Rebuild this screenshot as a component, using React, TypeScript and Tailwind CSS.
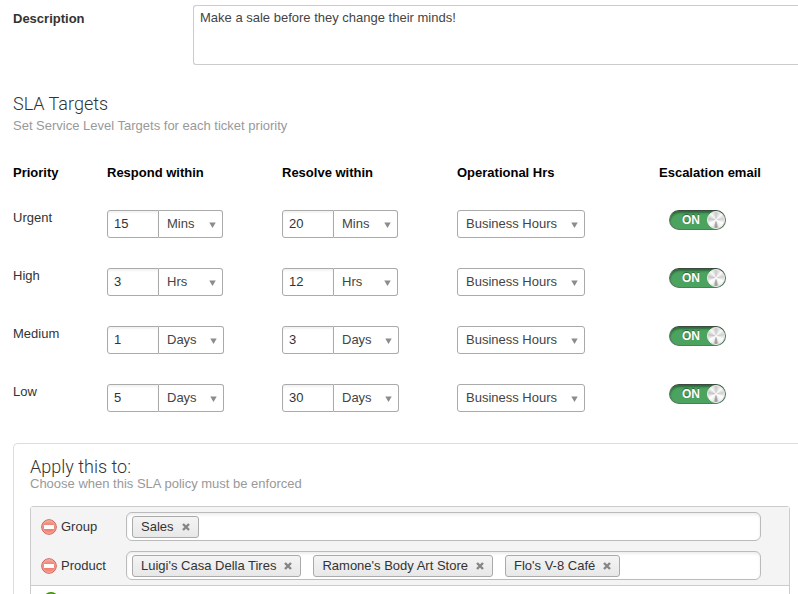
import { useState } from 'react';

type Unit = 'Mins' | 'Hrs' | 'Days';

interface Target {
  priority: string;
  respond: [string, Unit];
  resolve: [string, Unit];
}

const targets: Target[] = [
  { priority: 'Urgent', respond: ['15', 'Mins'], resolve: ['20', 'Mins'] },
  { priority: 'High', respond: ['3', 'Hrs'], resolve: ['12', 'Hrs'] },
  { priority: 'Medium', respond: ['1', 'Days'], resolve: ['3', 'Days'] },
  { priority: 'Low', respond: ['5', 'Days'], resolve: ['30', 'Days'] },
];

const conditions = [
  { name: 'Group', tags: ['Sales'] },
  { name: 'Product', tags: ["Luigi's Casa Della Tires", "Ramone's Body Art Store", "Flo's V-8 Café"] },
];

function Caret() {
  return (
    <svg className="pointer-events-none absolute top-3 right-[7px] h-[6px] w-[7px]" viewBox="0 0 7 6" aria-hidden="true">
      <path d="M0.3 0.5h6.4L3.5 6z" fill="#8c8c8c" />
    </svg>
  );
}

function Duration({ label, value, unit }: { label: string; value: string; unit: Unit }) {
  return (
    <div className="flex">
      <input
        type="text"
        aria-label={label}
        defaultValue={value}
        className="h-7 w-[52px] rounded-l-[3px] border border-[#aaa] bg-white px-1.5 pb-0.5 text-[#333] shadow-[inset_0_2px_2px_#f3f3f3]"
      />
      <div className="relative">
        <select
          aria-label={`${label} unit`}
          defaultValue={unit}
          className={`block h-7 appearance-none rounded-r-[3px] border border-l-0 border-[#aaa] bg-white pl-2 text-[#444] ${unit === 'Days' ? 'w-[65px]' : 'w-16'}`}
        >
          <option>Mins</option>
          <option>Hrs</option>
          <option>Days</option>
        </select>
        <Caret />
      </div>
    </div>
  );
}

function Toggle({ label }: { label: string }) {
  const [on, setOn] = useState(true);
  return (
    <label className="relative ml-2.5 flex h-5 w-[57px] items-center justify-between rounded-full border border-[#5c7563] border-t-[#3a4a3e] bg-[#4ca35f] pl-3 shadow-[inset_0_2px_2px_#2c6b3c]">
      <input type="checkbox" aria-label={label} checked={on} onChange={() => setOn(!on)} className="absolute inset-0 opacity-0" />
      <span className="text-[12px] leading-5 font-bold text-white [text-shadow:0_-1px_1px_#285f36]">{on ? 'ON' : 'OFF'}</span>
      <span className="h-[18px] w-[18px] rounded-full border border-[#eee] bg-[conic-gradient(#c9c9c9,#fafafa_45deg,#cfcfcf_80deg,#fff_115deg,#f0f0f0_155deg,#8e8e8e_180deg,#f0f0f0_205deg,#fff_240deg,#c4c4c4_280deg,#fafafa_320deg,#c9c9c9)]" />
    </label>
  );
}

function RemoveIcon() {
  return (
    <svg className="h-4 w-4" viewBox="0 0 16 16" aria-hidden="true">
      <defs>
        <linearGradient id="remove" x2="0" y2="1">
          <stop stopColor="#f5aa9e" />
          <stop offset="0.5" stopColor="#ee7567" />
          <stop offset="1" stopColor="#fa9484" />
        </linearGradient>
      </defs>
      <circle cx="8" cy="8" r="7.3" fill="url(#remove)" stroke="#c66459" />
      <circle cx="8" cy="8" r="6.3" fill="none" stroke="#fab5a9" strokeWidth="0.7" />
      <rect x="3" y="6" width="10" height="4" fill="#fff" />
    </svg>
  );
}

function AddIcon() {
  return (
    <svg className="h-4 w-4" viewBox="0 0 16 16" aria-hidden="true">
      <circle cx="8" cy="8" r="7.3" fill="#85cc2c" stroke="#3f8c0b" strokeWidth="1.4" />
      <path d="M8 4v8M4 8h8" stroke="#fff" strokeWidth="2.5" />
    </svg>
  );
}

function Tag({ text }: { text: string }) {
  return (
    <span className="flex h-[22px] items-center gap-2 rounded-[3px] border border-[#aaa] bg-linear-to-b from-[#f4f4f4] to-[#e8e8e8] px-2 whitespace-nowrap text-[#333]">
      {text}
      <button type="button" aria-label={`Remove ${text}`} className="flex">
        <svg className="h-2 w-2" viewBox="0 0 8 8" aria-hidden="true">
          <path d="M1 1l6 6M7 1L1 7" stroke="#858585" strokeWidth="2.4" />
        </svg>
      </button>
    </span>
  );
}

export default function App() {
  return (
    <main className="h-screen overflow-hidden bg-white pt-[5px] pl-[13px] font-['Liberation_Sans',Arial,sans-serif] text-[13px] leading-5 text-[#333]">
      <div className="flex">
        <label htmlFor="description" className="w-[180px] pt-1 font-bold">Description</label>
        <textarea
          id="description"
          defaultValue="Make a sale before they change their minds!"
          className="h-[60px] flex-1 resize-none rounded-l-[3px] border border-r-0 border-[#ccc] px-1.5 py-0.5 text-[#444]"
        />
      </div>

      <section className="mt-[27px]">
        <h2 className="font-['Roboto',sans-serif] text-[18px] leading-6 font-light">SLA Targets</h2>
        <p className="leading-5 text-[#999]">Set Service Level Targets for each ticket priority</p>

        <table className="mt-6 w-full table-fixed text-left">
          <thead>
            <tr className="h-[26px] align-middle text-black">
              <th className="w-[94px]">Priority</th>
              <th className="w-[175px]">Respond within</th>
              <th className="w-[175px]">Resolve within</th>
              <th className="w-[202px]">Operational Hrs</th>
              <th>Escalation email</th>
            </tr>
          </thead>
          <tbody>
            {targets.map((t) => (
              <tr key={t.priority} className="h-[58px] align-top">
                <th scope="row" className="pt-[22px] font-normal">{t.priority}</th>
                <td className="pt-6">
                  <Duration label={`${t.priority} respond within`} value={t.respond[0]} unit={t.respond[1]} />
                </td>
                <td className="pt-6">
                  <Duration label={`${t.priority} resolve within`} value={t.resolve[0]} unit={t.resolve[1]} />
                </td>
                <td className="pt-6">
                  <div className="relative w-32">
                    <select
                      aria-label={`${t.priority} operational hours`}
                      className="block h-7 w-full appearance-none rounded-[3px] border border-[#aaa] bg-white pl-2 text-[#444]"
                    >
                      <option>Business Hours</option>
                      <option>Calendar Hours</option>
                    </select>
                    <Caret />
                  </div>
                </td>
                <td className="pt-6">
                  <Toggle label={`${t.priority} escalation email`} />
                </td>
              </tr>
            ))}
          </tbody>
        </table>
      </section>

      <section className="mt-[25px] rounded-tl-[5px] border-t border-l border-[#ddd] pt-3.5 pr-2 pl-4">
        <h2 className="font-['Roboto',sans-serif] text-[18px] leading-[18px] font-light">Apply this to:</h2>
        <p className="leading-4 text-[#999]">Choose when this SLA policy must be enforced</p>

        <div className="mt-3.5 rounded-t-[3px] border border-[#ccc]">
          <div className="border-b border-[#ccc] bg-[#f4f4f4]">
            {conditions.map((c) => (
              <div key={c.name} className="flex h-[39px] items-center pr-7 pl-2.5">
                <button type="button" aria-label={`Remove ${c.name}`}>
                  <RemoveIcon />
                </button>
                <label htmlFor={c.name} className="w-[69px] pl-1">{c.name}</label>
                <div className="flex h-[29px] min-w-0 flex-1 items-center gap-3 rounded-[6px] border border-[#bbb] bg-white px-[5px] shadow-[inset_0_2px_3px_#eee]">
                  {c.tags.map((tag) => (
                    <Tag key={tag} text={tag} />
                  ))}
                  <input id={c.name} type="text" className="min-w-0 flex-1 bg-transparent outline-none" />
                </div>
              </div>
            ))}
          </div>
          <div className="flex h-[39px] items-start px-3 pt-1.5">
            <button type="button" aria-label="Add condition">
              <AddIcon />
            </button>
          </div>
        </div>
      </section>
    </main>
  );
}
